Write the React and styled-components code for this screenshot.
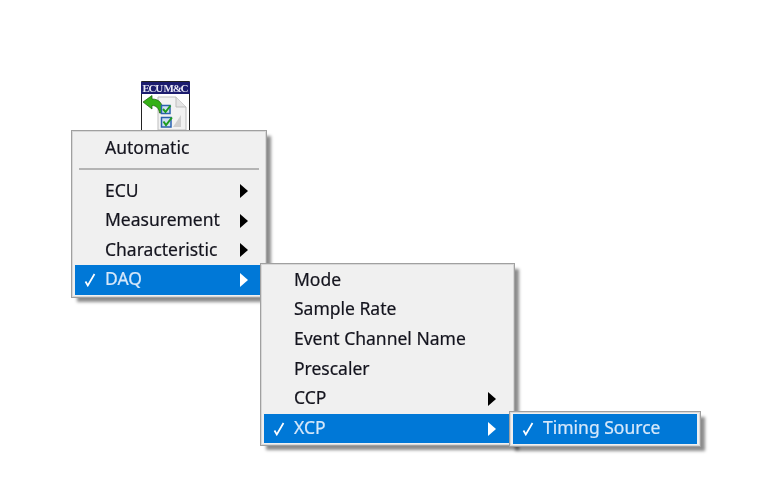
import React from "react";
import styled, { createGlobalStyle } from "styled-components";

const GlobalStyle = createGlobalStyle`
  html, body {
    margin: 0;
    padding: 0;
    background: #fff;
  }
`;

const Canvas = styled.div`
  position: relative;
  width: 775px;
  height: 503px;
  overflow: hidden;
  background: #fff;
  font-family: "Noto Sans", "Open Sans", sans-serif;
  font-size: 17.5px;
  filter: blur(0.4px);
`;

const VI = styled.svg`
  position: absolute;
  left: 140px;
  top: 81px;
`;

const Menu = styled.div`
  position: absolute;
  left: ${(p) => p.$x}px;
  top: ${(p) => p.$y}px;
  width: ${(p) => p.$w}px;
  box-sizing: border-box;
  padding: ${(p) => p.$pad}px 3px 2px;
  background: #f0f0f0;
  border: 1px solid #a0a0a0;
  box-shadow: 0 0 0 1px #d8d8d8 inset, 5px 5px 3px -1px rgba(0, 0, 0, 0.45);
`;

const Row = styled.div`
  display: flex;
  align-items: center;
  height: 29.6px;
  padding-right: 15px;
  color: ${(p) => (p.$active ? "#d6e8fa" : "#14141e")};
  background: ${(p) => (p.$active ? "#0078d7" : "transparent")};
  -webkit-text-stroke: 0.2px currentColor;
`;

const CheckCol = styled.span`
  flex: none;
  width: 30px;
  display: flex;
  justify-content: center;
`;

const Label = styled.span`
  flex: 1;
  white-space: nowrap;
  line-height: 1;
  position: relative;
  top: -1px;
`;

const Arrow = styled.span`
  flex: none;
  width: 0;
  height: 0;
  border-top: 7px solid transparent;
  border-bottom: 7px solid transparent;
  border-left: 8px solid ${(p) => (p.$active ? "#fff" : "#000")};
`;

const Separator = styled.div`
  height: 2px;
  margin: 5px 4px 6px;
  background: #b4b4b4;
`;

const Check = () => (
  <svg width="12" height="14" viewBox="0 0 12 14">
    <path d="M1.5 8.5 L3.8 12.5 L10.5 1" fill="none" stroke="#fff" strokeWidth="1.7" />
  </svg>
);

const Item = ({ label, active, checked, submenu }) => (
  <Row $active={active}>
    <CheckCol>{checked && <Check />}</CheckCol>
    <Label>{label}</Label>
    {submenu && <Arrow $active={active} />}
  </Row>
);

const EcuIcon = () => (
  <VI width="51" height="50" viewBox="0 0 51 50">
    <rect x="1" y="0" width="49" height="49" fill="#fff" />
    <path d="M1.5 49V.5h48V49" fill="none" stroke="#222" />
    <rect x="1" y="1" width="49" height="12" fill="#1c1c6e" />
    <text x="25.5" y="10.5" textAnchor="middle" fill="#e8e8f4" fontFamily="Liberation Serif, serif" fontSize="11" fontWeight="700" textLength="46">
      ECU M&amp;C
    </text>
    <path d="M18 16h18l10 10v23H18z" fill="#f2f2f2" stroke="#bdbdbd" />
    <path d="M36 16v10h10" fill="#e4e4e4" stroke="#bdbdbd" />
    <path d="M33 46l8-12v12z" fill="#cfcfcf" />
    <path d="M3 21 L12 14.5 L12 18 C19 18 23 22 23.5 32 L19.5 32 C19 27 16 24.5 12 24.5 L12 28 Z" fill="#35b016" stroke="#175c08" strokeWidth="0.7" />
    <rect x="21.5" y="24.5" width="8.5" height="8" fill="#cfe0f4" stroke="#2a62ae" strokeWidth="1.5" />
    <path d="M23 28l2.5 3 5-6.5" fill="none" stroke="#1f9c1f" strokeWidth="2" />
    <rect x="21.5" y="36.5" width="9.5" height="9.5" fill="#cfe0f4" stroke="#2a62ae" strokeWidth="1.5" />
    <path d="M23.5 40.5l2.5 3.5 6-7.5" fill="none" stroke="#1f9c1f" strokeWidth="2" />
  </VI>
);

const App = () => (
  <>
    <GlobalStyle />
    <Canvas>
      <EcuIcon />
      <Menu $x={71} $y={130} $w={196} $pad={2.9}>
        <Item label="Automatic" />
        <Separator />
        <Item label="ECU" submenu />
        <Item label="Measurement" submenu />
        <Item label="Characteristic" submenu />
        <Item label="DAQ" submenu active checked />
      </Menu>
      <Menu $x={260} $y={263} $w={255} $pad={1.85}>
        <Item label="Mode" />
        <Item label="Sample Rate" />
        <Item label="Event Channel Name" />
        <Item label="Prescaler" />
        <Item label="CCP" submenu />
        <Item label="XCP" submenu active checked />
      </Menu>
      <Menu $x={509} $y={411} $w={192} $pad={2}>
        <Item label="Timing Source" active checked />
      </Menu>
    </Canvas>
  </>
);

export default App;
